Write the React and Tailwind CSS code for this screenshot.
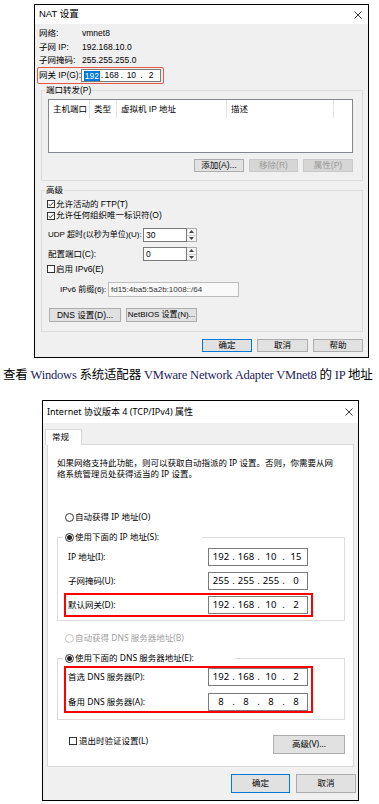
import React from "react";

const ui = "font-['Noto_Sans','Noto_Sans_CJK_SC',sans-serif]";
const ui1 = "font-['Liberation_Sans','Noto_Sans_CJK_SC',sans-serif]";

function CloseX() {
  return (
    <svg width="8" height="8" viewBox="0 0 8 8">
      <path d="M0.5 0.5L7.5 7.5M7.5 0.5L0.5 7.5" stroke="#222" strokeWidth="0.9" />
    </svg>
  );
}

function Check({ checked }) {
  return (
    <span className="w-[8px] h-[8px] border border-[#333] bg-white flex items-center justify-center shrink-0">
      {checked && (
        <svg width="6" height="6" viewBox="0 0 6 6">
          <path d="M0.6 3.1L2.3 4.7L5.4 1.2" stroke="#222" strokeWidth="0.9" fill="none" />
        </svg>
      )}
    </span>
  );
}

function Radio({ on, disabled }) {
  return (
    <span
      className={`w-[9px] h-[9px] rounded-full border bg-white flex items-center justify-center shrink-0 ${
        disabled ? "border-[#c6c6c6]" : "border-[#333]"
      }`}
    >
      {on && <span className="w-[5px] h-[5px] rounded-full bg-[#222]" />}
    </span>
  );
}

function Btn({ children, className = "", primary, disabled }) {
  return (
    <div
      className={`flex items-center justify-center border whitespace-nowrap shrink-0 ${
        disabled
          ? "bg-[#d6d6d6] border-[#c9c9c9] text-[#9a9a9a]"
          : primary
          ? "bg-[#e1e1e1] border-[#0078d7] text-black"
          : "bg-[#e1e1e1] border-[#adadad] text-black"
      } ${className}`}
    >
      {children}
    </div>
  );
}

function Spin() {
  return (
    <div className="w-[10px] h-[14px] shrink-0 border border-l-0 border-[#adadad] bg-[#f4f4f4] flex flex-col">
      <div className="flex-1 flex items-center justify-center border-b border-[#d0d0d0]">
        <svg width="5" height="3" viewBox="0 0 5 3">
          <path d="M0 3L2.5 0L5 3Z" fill="#444" />
        </svg>
      </div>
      <div className="flex-1 flex items-center justify-center">
        <svg width="5" height="3" viewBox="0 0 5 3">
          <path d="M0 0L2.5 3L5 0Z" fill="#444" />
        </svg>
      </div>
    </div>
  );
}

function IpBox({ parts }) {
  return (
    <div className="w-[100px] h-[18px] shrink-0 border border-[#7a7a7a] bg-white flex items-center pl-[1px] text-[9.5px]">
      {parts.map((p, i) => (
        <React.Fragment key={i}>
          {i > 0 && <span className="w-[3px] text-center">.</span>}
          <span className="w-[22px] text-center">{p}</span>
        </React.Fragment>
      ))}
    </div>
  );
}

function IpRow({ label, parts, red }) {
  return (
    <div
      className={`ml-[1px] w-[249px] h-[24px] border-2 flex items-center justify-between pl-[2px] pr-[3px] ${
        red ? "border-[#ff0000]" : "border-transparent"
      }`}
    >
      <span>{label}</span>
      <IpBox parts={parts} />
    </div>
  );
}

function NatDialog() {
  const cols = [
    ["主机端口", "w-[41px]"],
    ["类型", "w-[27px]"],
    ["虚拟机 IP 地址", "w-[110px]"],
    ["描述", "w-[107px]"],
  ];
  return (
    <div className={`ml-[34px] w-[335px] h-[354px] border border-black bg-[#f0f0f0] flex flex-col text-[8.5px] text-black whitespace-nowrap ${ui1}`}>
      <div className="h-[19px] shrink-0 bg-white flex items-center justify-between pl-[4px] pr-[6px]">
        <span className="text-[9.5px]">NAT 设置</span>
        <CloseX />
      </div>

      <div className="pl-[4px] pt-[2px]">
        <div className="h-[14px] flex items-center">
          <span className="w-[43px] shrink-0">网络:</span>
          <span>vmnet8</span>
        </div>
        <div className="h-[14px] flex items-center">
          <span className="w-[43px] shrink-0">子网 IP:</span>
          <span>192.168.10.0</span>
        </div>
        <div className="h-[13px] flex items-center">
          <span className="w-[43px] shrink-0">子网掩码:</span>
          <span>255.255.255.0</span>
        </div>
      </div>

      <div className="ml-[2px] w-[127px] h-[17px] border border-[#e4574c] rounded-[2px] flex items-center pl-[1px]">
        <span className="w-[42px] shrink-0">网关 IP(G):</span>
        <div className="w-[80px] h-[13px] shrink-0 border border-[#7a7a7a] bg-white flex items-center pl-[1px] text-[8.5px]">
          <span className="w-[18px] flex justify-center">
            <span className="bg-[#0078d7] text-white px-[1px] leading-[10px]">192</span>
          </span>
          <span className="w-[2px] text-center">.</span>
          <span className="w-[18px] text-center">168</span>
          <span className="w-[2px] text-center">.</span>
          <span className="w-[18px] text-center">10</span>
          <span className="w-[2px] text-center">.</span>
          <span className="w-[18px] text-center">2</span>
        </div>
      </div>

      <fieldset className="ml-[6px] w-[322px] h-[97px] border border-[#dcdcdc] px-[6px]">
        <legend className="-ml-[3px] px-[1px] leading-[12px]">端口转发(P)</legend>
        <div className="mt-[3px] w-[305px] h-[54px] border border-[#828790] bg-white">
          <div className="h-[18px] flex">
            {cols.map(([t, w]) => (
              <div key={t} className={`${w} h-full shrink-0 border-r border-[#e5e5e5] flex items-center pl-[4px]`}>
                {t}
              </div>
            ))}
          </div>
        </div>
        <div className="mt-[6px] w-[305px] flex justify-end gap-[5px]">
          <Btn className="w-[50px] h-[13px]">添加(A)...</Btn>
          <Btn className="w-[49px] h-[13px]" disabled>移除(R)</Btn>
          <Btn className="w-[50px] h-[13px]" disabled>属性(P)</Btn>
        </div>
      </fieldset>

      <fieldset className="mt-[3px] ml-[6px] w-[322px] h-[148px] border border-[#dcdcdc] px-[6px]">
        <legend className="-ml-[3px] px-[1px] leading-[12px]">高级</legend>
        <div className="mt-[2px] h-[12px] flex items-center gap-[1px] -ml-[1px]">
          <Check checked />
          <span>允许活动的 FTP(T)</span>
        </div>
        <div className="h-[11px] flex items-center gap-[1px] -ml-[1px]">
          <Check checked />
          <span>允许任何组织唯一标识符(O)</span>
        </div>
        <div className="mt-[7px] h-[14px] flex items-center">
          <span className="w-[95px] shrink-0 text-[8px]">UDP 超时(以秒为单位)(U):</span>
          <div className="w-[44px] h-[14px] shrink-0 border border-[#7a7a7a] bg-white pl-[2px] leading-[12px]">30</div>
          <Spin />
        </div>
        <div className="mt-[5px] h-[14px] flex items-center">
          <span className="w-[95px] shrink-0">配置端口(C):</span>
          <div className="w-[44px] h-[14px] shrink-0 border border-[#7a7a7a] bg-white pl-[2px] leading-[12px]">0</div>
          <Spin />
        </div>
        <div className="mt-[2px] h-[12px] flex items-center gap-[1px] -ml-[1px]">
          <Check />
          <span>启用 IPv6(E)</span>
        </div>
        <div className="mt-[7px] h-[15px] flex items-center pl-[12px]">
          <span className="w-[48px] shrink-0 text-[8px]">IPv6 前缀(6):</span>
          <div className="w-[131px] h-[15px] shrink-0 border border-[#bcbcbc] bg-[#f9f9f9] pl-[2px] flex items-center text-[8px] text-[#333]">
            fd15:4ba5:5a2b:1008::/64
          </div>
        </div>
        <div className="mt-[11px] flex gap-[5px] ml-[1px]">
          <Btn className="w-[72px] h-[14px]">DNS 设置(D)...</Btn>
          <Btn className="w-[71px] h-[14px] text-[8px]">NetBIOS 设置(N)...</Btn>
        </div>
      </fieldset>

      <div className="mt-[7px] flex justify-end gap-[5px] pr-[5px]">
        <Btn className="w-[50px] h-[13px]" primary>确定</Btn>
        <Btn className="w-[51px] h-[13px]">取消</Btn>
        <Btn className="w-[50px] h-[13px]">帮助</Btn>
      </div>
    </div>
  );
}

function Ipv4Dialog() {
  return (
    <div className={`ml-[42px] w-[317px] h-[401px] border border-black bg-[#f0f0f0] flex flex-col text-[8.5px] text-black whitespace-nowrap ${ui}`}>
      <div className="h-[22px] shrink-0 bg-white flex items-center justify-between pl-[4px] pr-[5px]">
        <span className="text-[9px]">Internet 协议版本 4 (TCP/IPv4) 属性</span>
        <CloseX />
      </div>

      <div className="mt-[6px] ml-[2px] w-[37px] h-[16px] -mb-[1px] relative bg-white border border-b-0 border-[#d9d9d9] flex items-center pl-[6px]">
        常规
      </div>

      <div className="ml-[4px] w-[307px] h-[323px] border border-[#d9d9d9] bg-white">
        <div className="mt-[12px] ml-[9px] leading-[11px]">
          如果网络支持此功能，则可以获取自动指派的 IP 设置。否则，你需要从网
          <br />
          络系统管理员处获得适当的 IP 设置。
        </div>

        <div className="mt-[32px] ml-[17px] h-[12px] flex items-center gap-[1px]">
          <Radio />
          <span>自动获得 IP 地址(O)</span>
        </div>

        <fieldset className="mt-[8px] ml-[9px] w-[288px] h-[90px] border border-[#dcdcdc] pl-[5px]">
          <legend className="pl-[2px] w-[139px] h-[12px] flex items-center gap-[1px]">
            <Radio on />
            <span>使用下面的 IP 地址(S):</span>
          </legend>
          <div className="mt-[2px]">
            <IpRow label="IP 地址(I):" parts={["192", "168", "10", "15"]} />
            <IpRow label="子网掩码(U):" parts={["255", "255", "255", "0"]} />
            <IpRow label="默认网关(D):" parts={["192", "168", "10", "2"]} red />
          </div>
        </fieldset>

        <div className="mt-[11px] ml-[17px] h-[12px] flex items-center gap-[1px] text-[#a0a0a0]">
          <Radio disabled />
          <span>自动获得 DNS 服务器地址(B)</span>
        </div>

        <fieldset className="mt-[8px] ml-[9px] w-[288px] h-[68px] border border-[#dcdcdc] pl-[5px]">
          <legend className="pl-[2px] w-[172px] h-[12px] flex items-center gap-[1px]">
            <Radio on />
            <span>使用下面的 DNS 服务器地址(E):</span>
          </legend>
          <div className="mt-[2px] ml-[1px] w-[249px] border-2 border-[#ff0000] flex flex-col gap-[7px]">
            <div className="h-[18px] flex items-center justify-between pl-[2px] pr-[3px]">
              <span>首选 DNS 服务器(P):</span>
              <IpBox parts={["192", "168", "10", "2"]} />
            </div>
            <div className="h-[18px] flex items-center justify-between pl-[2px] pr-[3px]">
              <span>备用 DNS 服务器(A):</span>
              <IpBox parts={["8", "8", "8", "8"]} />
            </div>
          </div>
        </fieldset>

        <div className="mt-[15px] flex items-start pl-[21px] pr-[8px]">
          <div className="h-[12px] flex items-center gap-[2px]">
            <Check />
            <span>退出时验证设置(L)</span>
          </div>
          <Btn className="ml-auto w-[72px] h-[19px]">高级(V)...</Btn>
        </div>
      </div>

      <div className="mt-[7px] flex justify-end gap-[6px] pr-[2px]">
        <Btn className="w-[59px] h-[19px]" primary>确定</Btn>
        <Btn className="w-[60px] h-[19px]">取消</Btn>
      </div>
    </div>
  );
}

export default function App() {
  const en = "text-[#1c1c5c]";
  return (
    <div className="w-[379px] h-[804px] bg-white pt-[4px] overflow-hidden">
      <NatDialog />
      <div className="mt-[9px] h-[16px] leading-[16px] pl-[3px] whitespace-nowrap text-[12.5px] tracking-[-0.2px] text-black font-['Liberation_Serif','Noto_Sans_CJK_SC',serif]">
        查看 <span className={en}>Windows</span> 系统适配器{" "}
        <span className={en}>VMware Network Adapter VMnet8</span> 的 <span className={en}>IP</span> 地址
      </div>
      <div className="mt-[17px]">
        <Ipv4Dialog />
      </div>
    </div>
  );
}
